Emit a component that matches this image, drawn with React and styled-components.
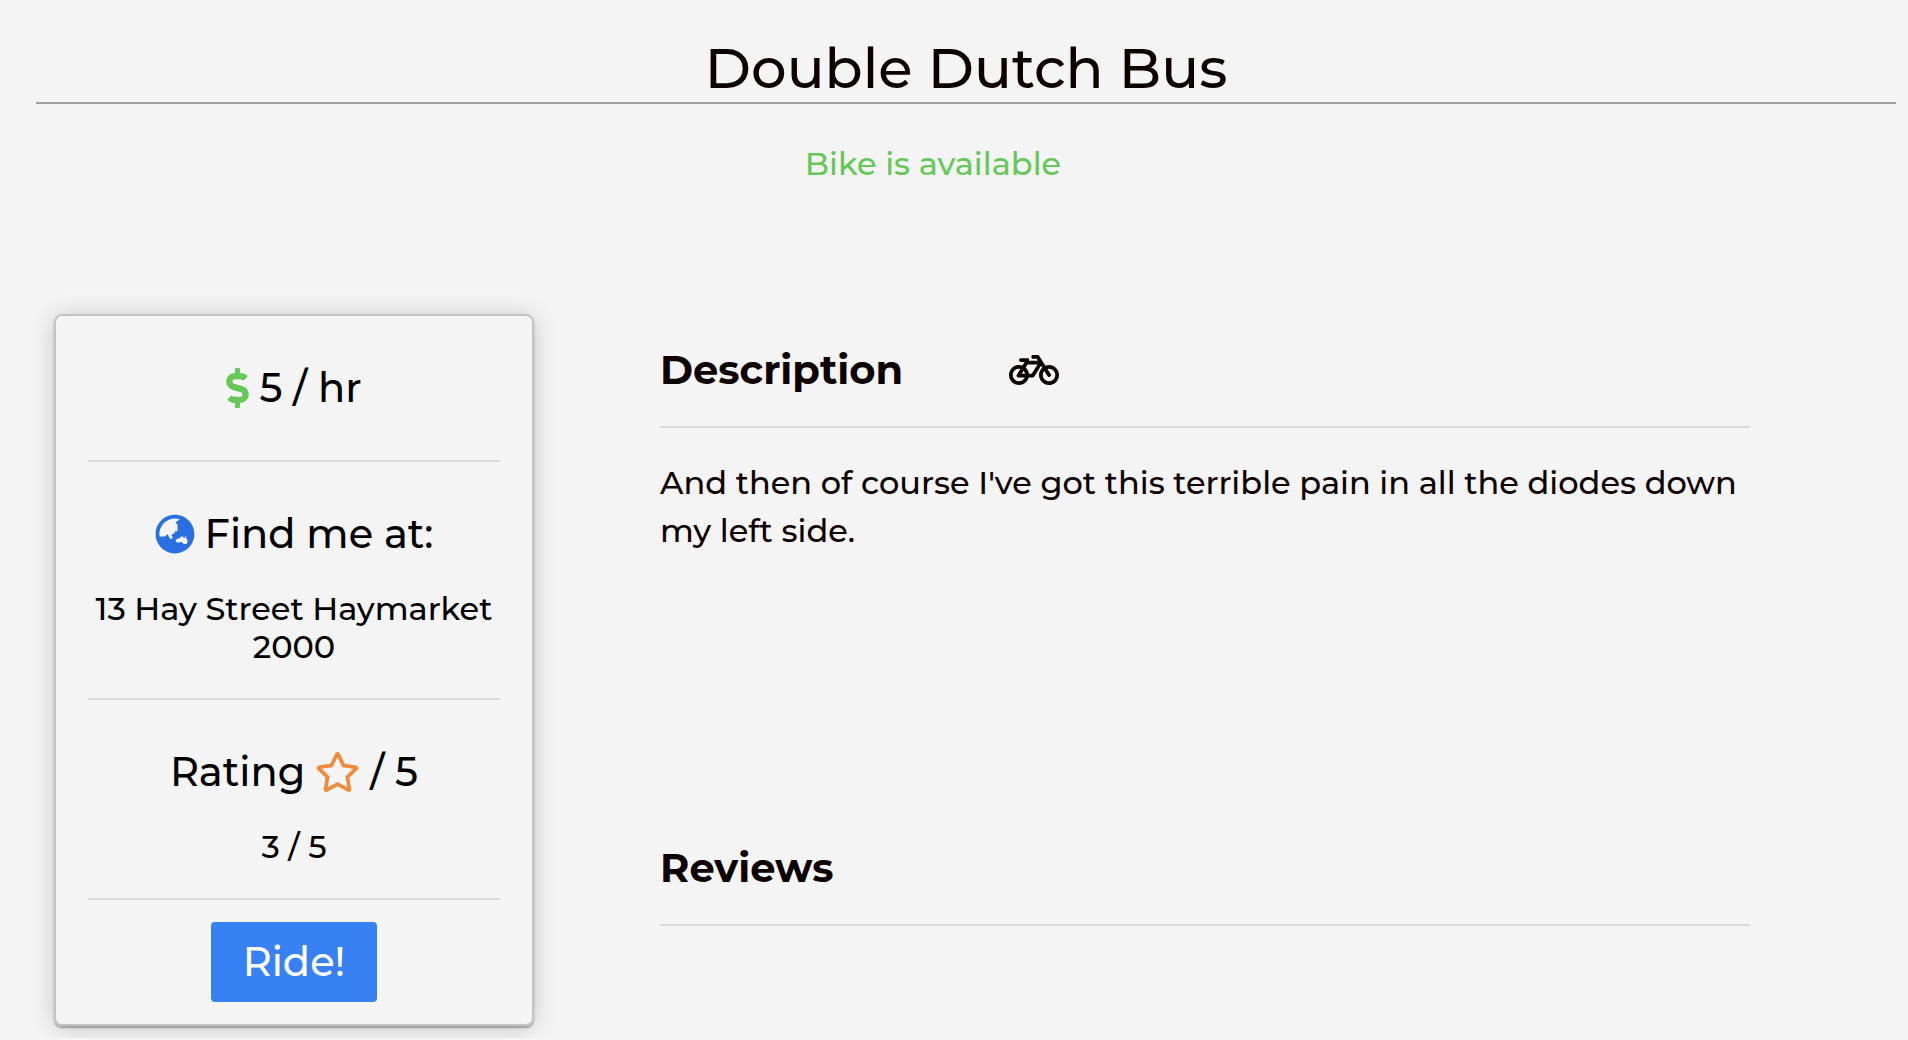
import React from "react";
import styled, { createGlobalStyle } from "styled-components";
import { FaBicycle, FaDollarSign, FaGlobeAsia, FaRegStar } from "react-icons/fa";

const GlobalStyle = createGlobalStyle`
  * { box-sizing: border-box; }
  body {
    margin: 0;
    background: #f4f4f4;
    color: #0d0000;
    font-family: Montserrat, Inter, "Liberation Sans", sans-serif;
    font-weight: 500;
  }
  h1, h2, h3, p { margin: 0; }
`;

const Page = styled.div`
  padding: 36px 12px 12px 36px;
`;

const Title = styled.h1`
  padding-bottom: 2px;
  border-bottom: 2px solid #9e9e9e;
  font-size: 56px;
  font-weight: 500;
  line-height: 64px;
  text-align: center;
`;

const Status = styled.p`
  padding: 40px 66px 0 0;
  color: #65c858;
  font-size: 32px;
  line-height: 40px;
  text-align: center;
`;

const Columns = styled.main`
  display: flex;
  align-items: flex-start;
  gap: 126px;
  padding: 130px 146px 0 18px;
`;

const Card = styled.aside`
  flex: 0 0 480px;
  display: flex;
  flex-direction: column;
  padding: 0 32px 22px;
  border: 2px solid #c4c4c4;
  border-radius: 8px;
  box-shadow: 0 2px 2px rgba(0, 0, 0, 0.3), 0 2px 24px rgba(0, 0, 0, 0.18);
  color: #000;
  text-align: center;
`;

const CardSection = styled.section`
  display: flex;
  flex-direction: column;
  gap: 32px;
  padding: 48px 0 ${(p) => p.$bottom}px;
  border-bottom: 2px solid #d9d9d9;
`;

const CardHeading = styled.h3`
  display: flex;
  align-items: center;
  justify-content: center;
  gap: 10px;
  font-size: 40px;
  font-weight: 500;
  line-height: 48px;
`;

const Icon = styled.span`
  display: flex;
  color: ${(p) => p.$color};

  svg {
    width: ${(p) => p.$width}px;
    height: 40px;
  }
`;

const CardText = styled.p`
  font-size: 32px;
  line-height: 38px;
`;

const RideButton = styled.button`
  align-self: center;
  margin-top: 22px;
  padding: 16px 32px;
  border: 0;
  border-radius: 4px;
  background: #3781f4;
  color: #fff;
  font: inherit;
  font-size: 40px;
  line-height: 48px;
  cursor: pointer;
`;

const Details = styled.div`
  flex: 1;
  min-width: 0;
  display: flex;
  flex-direction: column;
`;

const Section = styled.section`
  min-height: ${(p) => p.$minHeight}px;
`;

const SectionHeading = styled.h2`
  display: flex;
  align-items: center;
  gap: 106px;
  padding: 32px 0;
  border-bottom: 2px solid #d9d9d9;
  font-size: 40px;
  font-weight: 700;
  line-height: 48px;
`;

const Description = styled.p`
  padding-top: 31px;
  font-size: 32px;
  line-height: 48px;
`;

export default function App() {
  return (
    <>
      <GlobalStyle />
      <Page>
        <header>
          <Title>Double Dutch Bus</Title>
          <Status>Bike is available</Status>
        </header>
        <Columns>
          <Card>
            <CardSection $bottom={48}>
              <CardHeading>
                <Icon $color="#65c858" $width={23}>
                  <FaDollarSign aria-hidden="true" />
                </Icon>
                5 / hr
              </CardHeading>
            </CardSection>
            <CardSection $bottom={32}>
              <CardHeading>
                <Icon $color="#286fe0" $width={40}>
                  <FaGlobeAsia aria-hidden="true" />
                </Icon>
                Find me at:
              </CardHeading>
              <CardText>13 Hay Street Haymarket 2000</CardText>
            </CardSection>
            <CardSection $bottom={32}>
              <CardHeading>
                Rating
                <Icon $color="#f08b3c" $width={45}>
                  <FaRegStar aria-hidden="true" />
                </Icon>
                / 5
              </CardHeading>
              <CardText>3 / 5</CardText>
            </CardSection>
            <RideButton type="button">Ride!</RideButton>
          </Card>
          <Details>
            <Section $minHeight={498}>
              <SectionHeading>
                Description
                <Icon $width={50}>
                  <FaBicycle aria-hidden="true" />
                </Icon>
              </SectionHeading>
              <Description>
                And then of course I've got this terrible pain in all the diodes
                down my left side.
              </Description>
            </Section>
            <Section $minHeight={112}>
              <SectionHeading>Reviews</SectionHeading>
            </Section>
          </Details>
        </Columns>
      </Page>
    </>
  );
}
